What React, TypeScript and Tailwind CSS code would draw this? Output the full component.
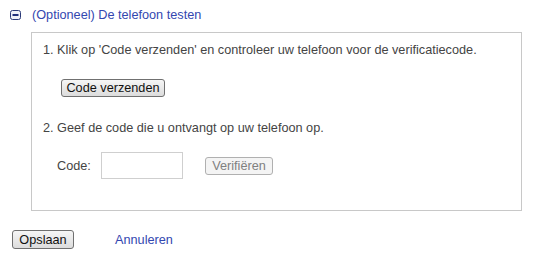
export default function App() {
  return (
    <div className="w-[543px] h-[261px] bg-white font-['Liberation_Sans',Arial,sans-serif] text-[12.7px] leading-[16px] text-[#444]">
      <div className="flex items-center pl-[10px] pt-[7px] h-[23px]">
        <svg width="11" height="10" viewBox="0 0 11 10" className="shrink-0">
          <rect x="0.5" y="0.5" width="10" height="9" rx="2" fill="#eef0f8" stroke="#2b3a78" />
          <rect x="2.5" y="4" width="6" height="2" fill="#1f2f7a" />
        </svg>
        <span className="ml-[11px] text-[#3347b0]">(Optioneel) De telefoon testen</span>
      </div>

      <div className="ml-[31px] mt-[9px] w-[491px] h-[179px] border border-[#c8c8c8] px-[11px] pt-[9px]">
        <div>1. Klik op 'Code verzenden' en controleer uw telefoon voor de verificatiecode.</div>
        <button className="ml-[18px] mt-[21px] h-[18px] w-[104px] rounded-[3px] border border-[#707070] bg-gradient-to-b from-[#f6f6f6] to-[#dcdcdc] text-[12.7px] leading-[16px] text-[#111]">
          Code verzenden
        </button>
        <div className="mt-[23px]">2. Geef de code die u ontvangt op uw telefoon op.</div>
        <div className="flex items-center ml-[14px] mt-[16px]">
          <span className="w-[44px]">Code:</span>
          <input className="w-[82px] h-[27px] border border-[#cfcfcf] outline-none px-1" />
          <button className="ml-[22px] h-[18px] w-[68px] rounded-[3px] border border-[#b0b0b0] bg-[#f4f4f4] text-[12.7px] leading-[16px] text-[#808080]">
            Verifiëren
          </button>
        </div>
      </div>

      <div className="flex items-center pl-[12px] mt-[19px]">
        <button className="h-[19px] w-[62px] rounded-[3px] border border-[#707070] bg-gradient-to-b from-[#f6f6f6] to-[#dcdcdc] text-[12.7px] leading-[16px] text-[#111]">
          Opslaan
        </button>
        <a className="ml-[41px] text-[#3347b0]">Annuleren</a>
      </div>
    </div>
  );
}
